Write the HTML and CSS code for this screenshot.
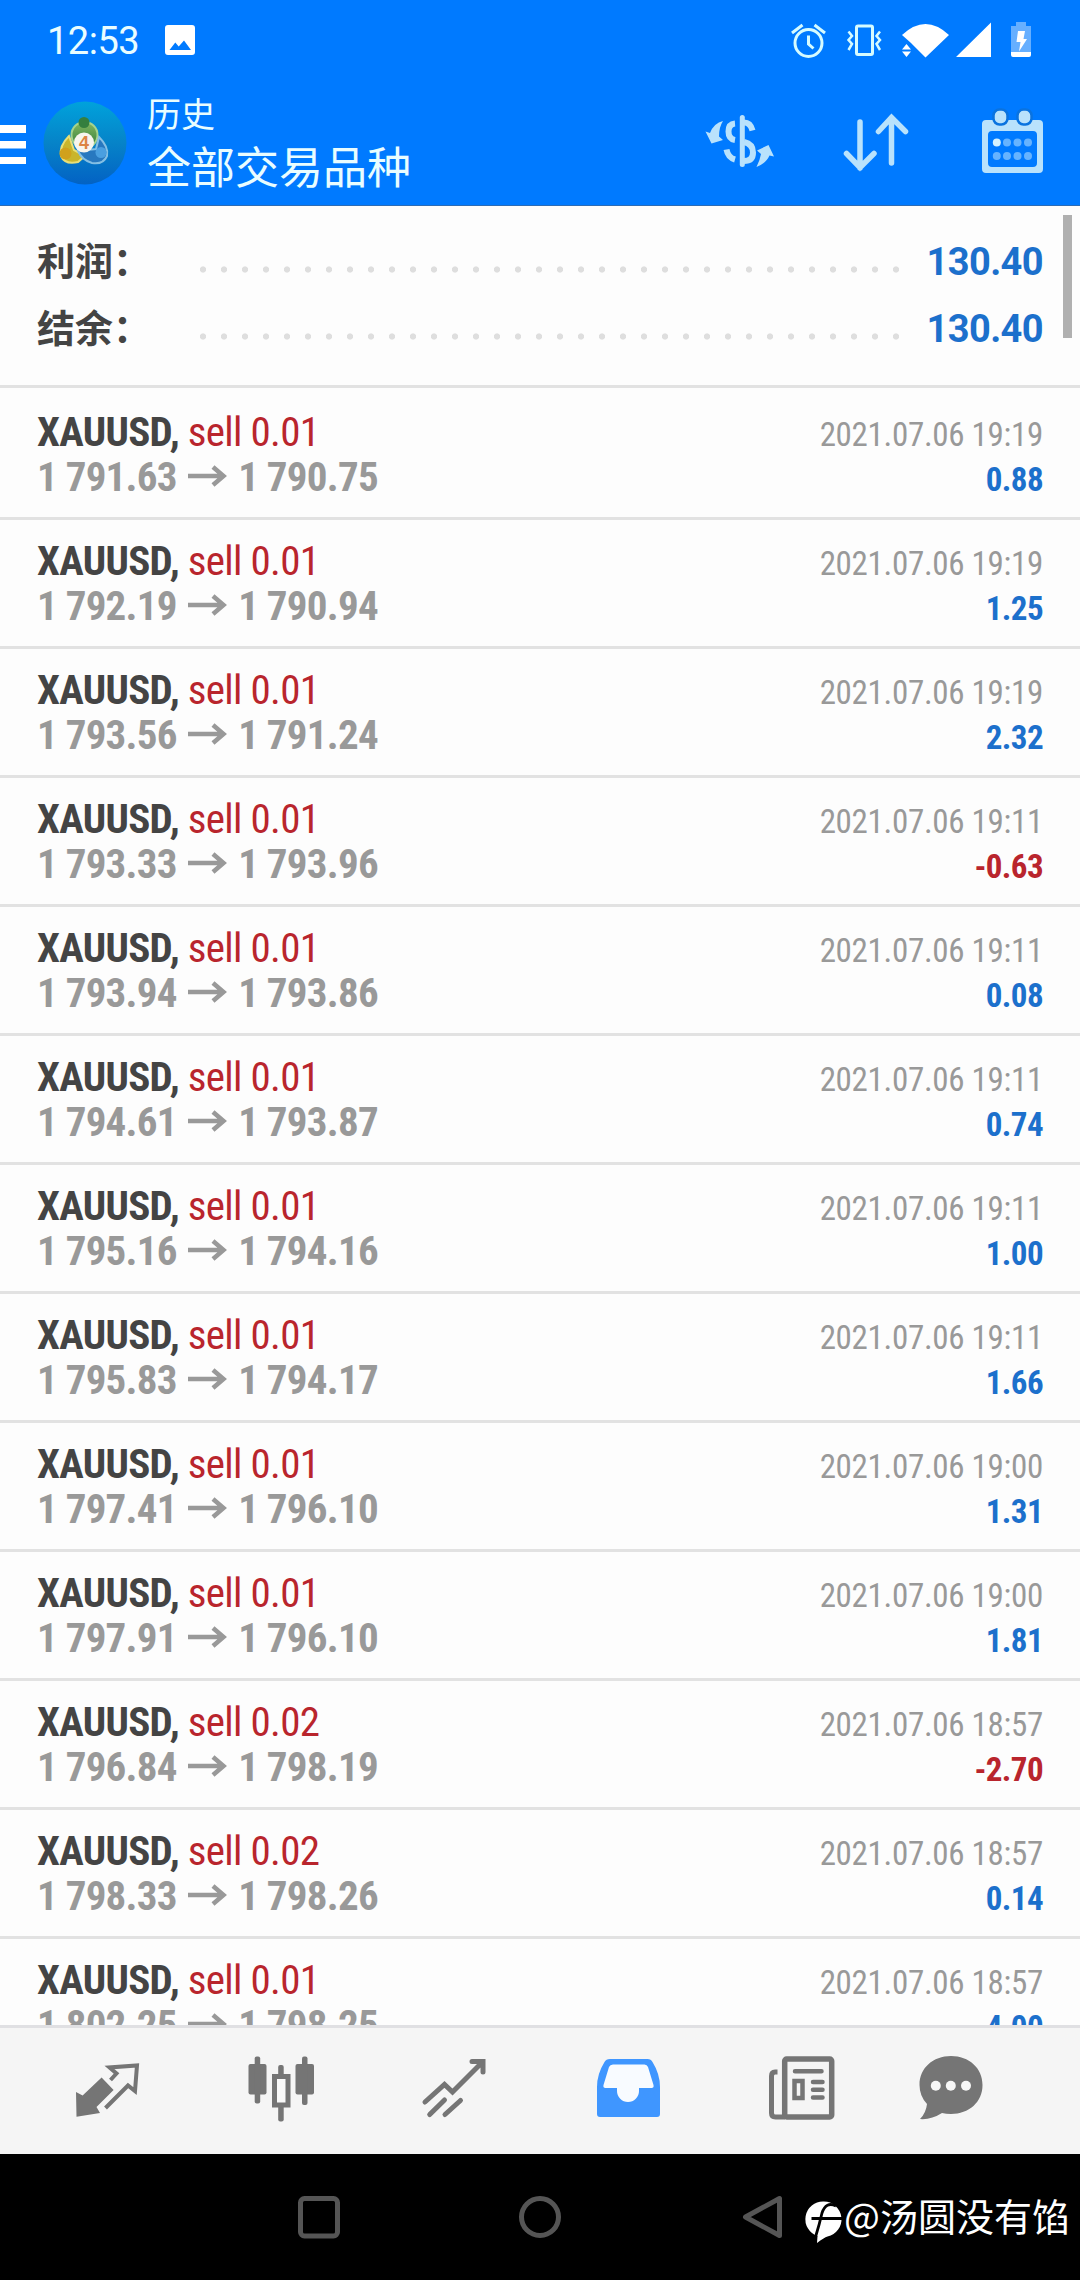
FILE: index.html
```
<!DOCTYPE html>
<html lang="zh-CN">
<head>
<meta charset="utf-8">
<title>历史</title>
<link rel="stylesheet" href="styles.css">
</head>
<body>
<svg class="defs" aria-hidden="true">
  <symbol id="arrow" viewBox="0 0 40 24"><path d="M1 12H36M26 3L36.500 12L26 21" fill="none" stroke="#999" stroke-width="4.500"/></symbol>
</svg>
<div class="screen">
  <header class="header">
    <div class="status">
      <span class="clock">12:53</span>
      <svg class="photo" viewBox="165 25 30 31" width="30" height="31"><path fill="#fff" fill-rule="evenodd" d="M168 25h24a3 3 0 0 1 3 3v24a3 3 0 0 1-3 3h-24a3 3 0 0 1-3-3V28a3 3 0 0 1 3-3zM169.500 50h21.500l-7-9.500-5.300 6-3.400-4z"/></svg>
      <svg class="system" viewBox="788 20 246 42" width="246" height="42">
        <g fill="none" stroke="#d5fbff" stroke-width="3">
          <circle cx="808.500" cy="43" r="13.500"/>
          <path d="M808.500 35.500v8.500l5 4.500M792 33l10.500-8M825 33l-10.500-8"/>
          <rect x="856.500" y="26" width="16" height="28.500" rx="1.500"/>
          <path d="M848.500 31.500l3.500 4.500-3.500 4 3.500 4-3.500 6M880 31.500l-3.500 4.500 3.500 4-3.500 4 3.500 6" stroke-width="2.500"/>
        </g>
        <g fill="#fff">
          <path d="M902 35Q925.500 13 949 35L925.500 57.500L911 43Z"/>
          <path d="M902 49.500l4.500-5.500 4.500 5.500zM902 51.500h9l-4.500 5.500zM956 57L991 22.500V57z"/>
          <path opacity=".4" d="M1016 22h10v4h5v26h-20V26h5z"/>
          <path d="M1011 52h20v3a2 2 0 0 1-2 2h-16a2 2 0 0 1-2-2zM1018 31h7l-1.500 8h3.500l-8 12.500 1.500-9.500h-4z"/>
        </g>
      </svg>
    </div>
    <div class="toolbar">
      <svg class="menu" viewBox="0 125 26 39" width="26" height="39"><path fill="#fff" d="M0 125h26v8H0zM0 141h26v7.500H0zM0 157h26v7H0z"/></svg>
      <svg class="logo" viewBox="42 101 86 85" width="86" height="85">
        <defs>
          <linearGradient id="sea" x1="0" y1="0" x2="0" y2="1"><stop offset="0" stop-color="#00a2dc"/><stop offset=".5" stop-color="#0683c8"/><stop offset="1" stop-color="#0362c4"/></linearGradient>
          <linearGradient id="leaf" x1="0" y1="0" x2="0" y2="1"><stop offset="0" stop-color="#86b860"/><stop offset="1" stop-color="#2d7c3a"/></linearGradient>
        </defs>
        <circle cx="85" cy="143" r="41.500" fill="url(#sea)"/>
        <circle cx="84.500" cy="135" r="13" fill="url(#leaf)" stroke="#a5d38d" stroke-width="2"/>
        <path d="M69 136Q59 146 61 156Q65 165 78 162L85 156L74 150Z" fill="#c9b52b" stroke="#e8df77" stroke-width="2"/>
        <path d="M99 137Q109 147 107 156Q103 165 92 163Q82 160 78 151L96 149Z" fill="#2878bf" stroke="#84bfe4" stroke-width="2"/>
        <circle cx="84" cy="122.500" r="5.500" fill="#357f3e"/>
        <circle cx="65.500" cy="153.500" r="6" fill="#d0a11c"/>
        <circle cx="101" cy="152.500" r="5.500" fill="#4a9fe0"/>
        <circle cx="84" cy="142.500" r="10" fill="#f7f5ed"/>
        <text x="84" y="148.500" class="four">4</text>
      </svg>
      <div class="titles"><div class="title">历史</div><div class="subtitle">全部交易品种</div></div>
      <svg class="tools" viewBox="700 105 350 73" width="350" height="73">
        <g fill="none" stroke="#b9e2fc" stroke-width="5">
          <path d="M742.300 117.500v47" stroke-linecap="round"/>
          <path d="M744 122.500Q750.500 122.500 752.500 130.500M735 123.500Q728.500 124 728.500 131.500T735 140M744 142Q753 144 753 152.500T744 161M726.500 149.500Q728 157.500 735 159.500" stroke-width="6"/>
          <path d="M860 122v46M846.500 153.500L860 167.500L874 153.500M891.500 163v-45.500M878.500 131.500L891.500 117.500L905.500 131.500" stroke-linecap="round" stroke-width="5.500"/>
        </g>
        <path fill="#b9e2fc" d="M723 121Q714 123 710 133L705.500 131.500L711.500 143.500L723 140L719 136.500Q719 127 723 121zM756.500 167Q760 160 761 154L757 150.500L768.500 145L774 156.500L769.500 155.500Q766 163.500 756.500 167z"/>
        <path fill="#b9e2fc" fill-rule="evenodd" d="M986 120h53a4 4 0 0 1 4 4v45a4 4 0 0 1-4 4h-53a4 4 0 0 1-4-4v-45a4 4 0 0 1 4-4zM992 131a4 4 0 0 0-4 4v28a4 4 0 0 0 4 4h41a4 4 0 0 0 4-4v-28a4 4 0 0 0-4-4z"/>
        <g fill="#b9e2fc" stroke="#0a73df" stroke-width="2.500"><rect x="993.500" y="109.500" width="14" height="15" rx="6"/><rect x="1017.500" y="109.500" width="14" height="15" rx="6"/></g>
        <g fill="#66b3ff"><circle cx="996.800" cy="142.500" r="4" fill="#d5f2ff"/><circle cx="1007" cy="142.500" r="4"/><circle cx="1017.500" cy="142.500" r="4"/><circle cx="1028" cy="142.500" r="4"/><circle cx="996.800" cy="156" r="4"/><circle cx="1007" cy="156" r="4"/><circle cx="1017.500" cy="156" r="4"/><circle cx="1028" cy="156" r="4"/></g>
      </svg>
    </div>
  </header>
  <main class="history">
    <section class="summary">
      <div class="total"><span class="label">利润：</span><span class="dots"></span><span class="amount">130.40</span></div>
      <div class="total"><span class="label">结余：</span><span class="dots"></span><span class="amount">130.40</span></div>
    </section>
    <div class="scrollbar"></div>
    <div class="deal"><div class="name">XAUUSD, <span>sell 0.01</span></div><div class="time">2021.07.06 19:19</div><div class="prices">1 791.63<svg><use href="#arrow"/></svg>1 790.75</div><div class="profit">0.88</div></div>
    <div class="deal"><div class="name">XAUUSD, <span>sell 0.01</span></div><div class="time">2021.07.06 19:19</div><div class="prices">1 792.19<svg><use href="#arrow"/></svg>1 790.94</div><div class="profit">1.25</div></div>
    <div class="deal"><div class="name">XAUUSD, <span>sell 0.01</span></div><div class="time">2021.07.06 19:19</div><div class="prices">1 793.56<svg><use href="#arrow"/></svg>1 791.24</div><div class="profit">2.32</div></div>
    <div class="deal"><div class="name">XAUUSD, <span>sell 0.01</span></div><div class="time">2021.07.06 19:11</div><div class="prices">1 793.33<svg><use href="#arrow"/></svg>1 793.96</div><div class="profit loss">-0.63</div></div>
    <div class="deal"><div class="name">XAUUSD, <span>sell 0.01</span></div><div class="time">2021.07.06 19:11</div><div class="prices">1 793.94<svg><use href="#arrow"/></svg>1 793.86</div><div class="profit">0.08</div></div>
    <div class="deal"><div class="name">XAUUSD, <span>sell 0.01</span></div><div class="time">2021.07.06 19:11</div><div class="prices">1 794.61<svg><use href="#arrow"/></svg>1 793.87</div><div class="profit">0.74</div></div>
    <div class="deal"><div class="name">XAUUSD, <span>sell 0.01</span></div><div class="time">2021.07.06 19:11</div><div class="prices">1 795.16<svg><use href="#arrow"/></svg>1 794.16</div><div class="profit">1.00</div></div>
    <div class="deal"><div class="name">XAUUSD, <span>sell 0.01</span></div><div class="time">2021.07.06 19:11</div><div class="prices">1 795.83<svg><use href="#arrow"/></svg>1 794.17</div><div class="profit">1.66</div></div>
    <div class="deal"><div class="name">XAUUSD, <span>sell 0.01</span></div><div class="time">2021.07.06 19:00</div><div class="prices">1 797.41<svg><use href="#arrow"/></svg>1 796.10</div><div class="profit">1.31</div></div>
    <div class="deal"><div class="name">XAUUSD, <span>sell 0.01</span></div><div class="time">2021.07.06 19:00</div><div class="prices">1 797.91<svg><use href="#arrow"/></svg>1 796.10</div><div class="profit">1.81</div></div>
    <div class="deal"><div class="name">XAUUSD, <span>sell 0.02</span></div><div class="time">2021.07.06 18:57</div><div class="prices">1 796.84<svg><use href="#arrow"/></svg>1 798.19</div><div class="profit loss">-2.70</div></div>
    <div class="deal"><div class="name">XAUUSD, <span>sell 0.02</span></div><div class="time">2021.07.06 18:57</div><div class="prices">1 798.33<svg><use href="#arrow"/></svg>1 798.26</div><div class="profit">0.14</div></div>
    <div class="deal"><div class="name">XAUUSD, <span>sell 0.01</span></div><div class="time">2021.07.06 18:57</div><div class="prices">1 802.25<svg><use href="#arrow"/></svg>1 798.25</div><div class="profit">4.00</div></div>
  </main>
  <nav class="tabs">
    <svg viewBox="72 2050 72 74" width="72" height="74"><path fill="#757575" d="M101.600 2077.500L113.600 2090L96.500 2107L100 2113L76.500 2116.700L76 2092L82.600 2095.500z"/><path fill="none" stroke="#757575" stroke-width="4" stroke-linejoin="miter" d="M110.500 2080L116.500 2073.500L109.500 2067.500L137 2065.500L135 2091L128 2085.500L105.500 2108"/></svg>
    <svg viewBox="244 2050 72 74" width="72" height="74"><g fill="#757575"><rect x="247.500" y="2064" width="18" height="30.500" rx="2"/><rect x="253.700" y="2056.500" width="5.500" height="47" rx="2"/><rect x="294.500" y="2064" width="18.500" height="30.500" rx="2"/><rect x="301" y="2056.500" width="5.500" height="48.500" rx="2"/><rect x="277.200" y="2065" width="5.500" height="12" rx="2"/><rect x="277.200" y="2105" width="5.500" height="16.500" rx="2"/></g><rect x="273.500" y="2076.500" width="13.500" height="28.500" fill="#f9f9f9" stroke="#757575" stroke-width="5"/></svg>
    <svg viewBox="418 2050 72 74" width="72" height="74"><path fill="none" stroke="#757575" stroke-width="5" stroke-linecap="round" stroke-linejoin="miter" d="M424 2102L443.500 2084.500L451.500 2092L481.500 2062M471 2061.500H482V2072M443.500 2100L428.700 2114.500M459.500 2100.500L444 2114.500"/></svg>
    <svg viewBox="591 2050 72 74" width="72" height="74"><path fill="#3f96ff" d="M609 2059h37.500Q650 2059 651.500 2062Q659 2074 659 2087v27a3 3 0 0 1-3 3h-57a3 3 0 0 1-3-3v-27Q596 2074 603.500 2062Q605 2059 609 2059z"/><path fill="#f8fbff" d="M612 2064.500h31.500q2.500 0 3.500 2.500l5.500 18q.7 3-2 3H638v3a11 11 0 0 1-22 0v-3h-11.500q-2.700 0-2-3l5.500-18q1-2.500 4-2.500z"/></svg>
    <svg viewBox="765 2050 72 74" width="72" height="74"><g fill="none" stroke="#757575" stroke-width="5.500"><rect x="784.700" y="2059" width="47" height="58" rx="2"/><path d="M777.500 2072H775Q771.500 2072 771.500 2076V2113Q771.500 2117 775.500 2117H785" stroke-width="5"/><path d="M795 2071.300h26.500M813 2082h9.500M813 2089.700h9.500M813 2097.500h9.500" stroke-linecap="round" stroke-width="4.500"/><rect x="794.500" y="2081" width="8" height="17" stroke-width="4.500"/></g></svg>
    <svg class="chat" viewBox="915 2050 72 74" width="72" height="74"><path fill="#757575" d="M951 2056C969 2056 982.500 2068 982.500 2085S969 2114 951 2114Q946 2114 942 2113Q931 2120 920 2119Q926 2113 927 2104Q919.500 2096 919.500 2085C919.500 2068 933 2056 951 2056z"/><g fill="#f7f7f7"><circle cx="935.800" cy="2085.700" r="5"/><circle cx="950.800" cy="2085.700" r="5"/><circle cx="966" cy="2085.700" r="5"/></g></svg>
  </nav>
  <footer class="system-nav">
    <svg viewBox="298 2192 486 50" width="486" height="50"><g fill="none" stroke="#555" stroke-width="5"><rect x="300.500" y="2198.500" width="37" height="37.500" rx="4"/><circle cx="540" cy="2217" r="18.500"/><path d="M745.500 2217L779.500 2198.500V2235.500Z" stroke-linejoin="round"/></g></svg>
    <svg class="mark" viewBox="805 2199 38 46" width="38" height="46"><path fill="#fff" d="M823.500 2201.500a17.700 17.700 0 0 1 4 35Q824 2237.500 817 2243L817.500 2236A17.700 17.700 0 0 1 823.500 2201.500z"/><path fill="none" stroke="#000" d="M836 2206Q826 2201 822 2213Q819.500 2224 815.500 2237M811.500 2218.500H842" stroke-width="2.800"/></svg>
    <span class="handle">@汤圆没有馅</span>
  </footer>
</div>
</body>
</html>
```
FILE: styles.css
```
* { box-sizing: border-box; }
body { margin: 0; background: #000; font-family: Roboto, "Noto Sans CJK SC", sans-serif; }
svg { display: block; flex: none; overflow: visible; }
.defs { position: absolute; width: 0; height: 0; }
.screen { width: 1080px; height: 2280px; display: flex; flex-direction: column; overflow: hidden; }

.header { height: 206px; background: #007aff; border-bottom: 1px solid #2d6cb5; }
.status { height: 80px; display: flex; align-items: flex-start; padding: 20px 46px 0 47px; }
.clock { width: 118px; font-size: 38px; line-height: 42px; letter-spacing: -0.5px; color: #e9fdff; }
.photo { margin-top: 5px; }
.system { margin-left: auto; }
.toolbar { height: 125px; display: flex; align-items: flex-start; padding-right: 30px; }
.menu { margin-top: 45px; }
.logo { margin: 21px 0 0 16px; }
.four { font: 700 18px "Liberation Sans", sans-serif; fill: #dc8443; text-anchor: middle; }
.titles { margin: 8px 0 0 19px; color: #e9fdff; font-family: "Noto Sans CJK SC", sans-serif; }
.title { font-size: 34px; line-height: 50px; }
.subtitle { font-size: 44px; line-height: 55px; }
.tools { margin: 25px 0 0 auto; }

.history { position: relative; flex: none; height: 1819px; overflow: hidden; background: #fdfdfd; }
.summary { height: 182px; padding: 22px 37px 0; border-bottom: 3px solid #e2e2e2; margin-bottom: 3px; }
.total { height: 67px; display: flex; align-items: center; font-weight: 700; }
.label { width: 162px; font-size: 38px; line-height: 61px; margin-bottom: 6px; font-family: "Noto Sans CJK SC", sans-serif; color: #444; }
.dots { width: 714px; height: 7px; margin-top: 15px; background: radial-gradient(circle at 4px 3.500px, #dedede 2.700px, transparent 3.500px) 0 0 / 21px 7px; }
.amount { margin-left: auto; font-size: 38px; letter-spacing: -0.6px; color: #1c70cc; }
.scrollbar { position: absolute; right: 8px; top: 9px; width: 9px; height: 123px; background: #b0b0b0; }
.deal { height: 129px; display: grid; grid-template: 45px 45px / 1fr auto; align-items: baseline; padding: 19px 37px 0 37px; border-bottom: 3px solid #e2e2e2; font-family: "Roboto Condensed", Roboto, sans-serif; line-height: 45px; }
.name { font-size: 41px; font-weight: 700; letter-spacing: -0.68px; color: #444; }
.name span { font-weight: 400; color: #b9252d; }
.time { font-size: 33px; letter-spacing: -0.3px; color: #999; text-align: right; }
.prices { display: flex; font-size: 41px; font-weight: 700; letter-spacing: -0.75px; color: #999; }
.prices svg { width: 40px; height: 24px; margin: 9px 11px 0 10.500px; }
.profit { font-size: 33px; font-weight: 700; letter-spacing: -0.6px; color: #1c70cc; text-align: right; }
.deal .loss { color: #b9252d; }

.tabs { flex: none; height: 129px; padding: 22px 0 0 72px; display: flex; gap: 101.300px; background: #f5f5f5; border-top: 3px solid #e0e0e3; }
.chat { margin-left: -23.500px; }
.system-nav { flex: none; height: 126px; display: flex; align-items: flex-start; padding: 38px 0 0 298px; background: #000; }
.mark { margin: 7px 0 0 21px; }
.handle { margin-left: 1px; font: 38px/46px "Noto Sans CJK SC", sans-serif; color: #fff; white-space: nowrap; }
```
